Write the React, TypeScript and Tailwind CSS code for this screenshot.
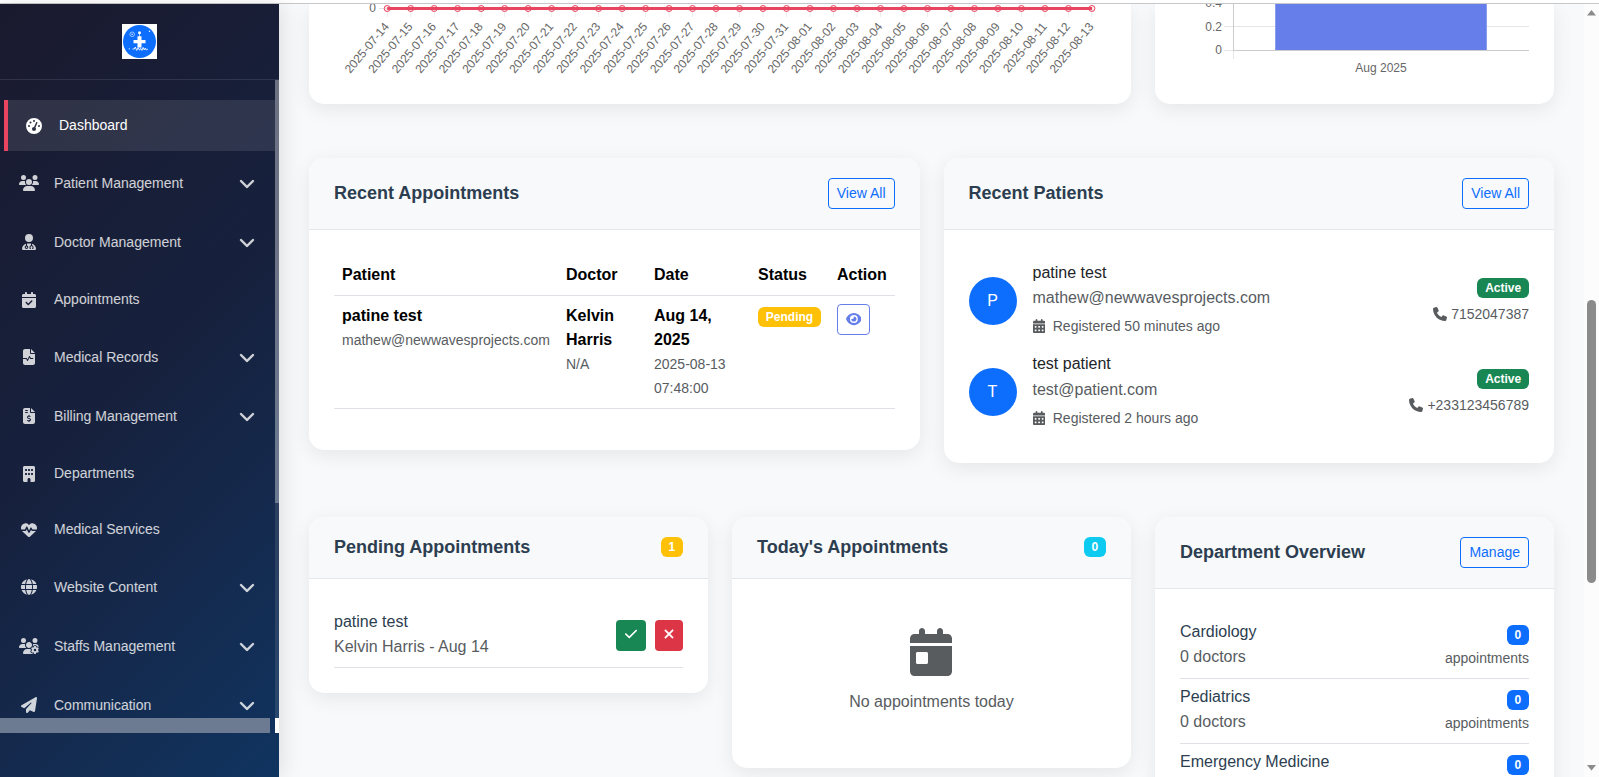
import { ReactNode } from "react";
import { IconType } from "react-icons";
import {
  FaBuilding,
  FaCalendarCheck,
  FaCalendarDay,
  FaCalendarDays,
  FaCheck,
  FaChevronDown,
  FaEye,
  FaFileInvoiceDollar,
  FaFileWaveform,
  FaGaugeHigh,
  FaGlobe,
  FaHeartPulse,
  FaPaperPlane,
  FaPhone,
  FaUserDoctor,
  FaUsers,
  FaUsersGear,
  FaXmark,
} from "react-icons/fa6";
import clsx from "clsx";

interface NavItem {
  label: string;
  icon: IconType;
  iconWidth: string;
  active?: boolean;
  expandable?: boolean;
}

const NAV_ITEMS: NavItem[] = [
  { label: "Dashboard", icon: FaGaugeHigh, iconWidth: "w-4", active: true },
  { label: "Patient Management", icon: FaUsers, iconWidth: "w-5", expandable: true },
  { label: "Doctor Management", icon: FaUserDoctor, iconWidth: "w-3.5", expandable: true },
  { label: "Appointments", icon: FaCalendarCheck, iconWidth: "w-3.5" },
  { label: "Medical Records", icon: FaFileWaveform, iconWidth: "w-4", expandable: true },
  { label: "Billing Management", icon: FaFileInvoiceDollar, iconWidth: "w-3", expandable: true },
  { label: "Departments", icon: FaBuilding, iconWidth: "w-3" },
  { label: "Medical Services", icon: FaHeartPulse, iconWidth: "w-4" },
  { label: "Website Content", icon: FaGlobe, iconWidth: "w-4", expandable: true },
  { label: "Staffs Management", icon: FaUsersGear, iconWidth: "w-5", expandable: true },
  { label: "Communication", icon: FaPaperPlane, iconWidth: "w-4", expandable: true },
];

const PATIENTS = [
  {
    initial: "P",
    name: "patine test",
    email: "mathew@newwavesprojects.com",
    registered: "Registered 50 minutes ago",
    phone: "7152047387",
  },
  {
    initial: "T",
    name: "test patient",
    email: "test@patient.com",
    registered: "Registered 2 hours ago",
    phone: "+233123456789",
  },
];

const DEPARTMENTS = ["Cardiology", "Pediatrics", "Emergency Medicine"];

const DAYS = Array.from({ length: 31 }, (_, i) =>
  i < 18 ? `2025-07-${14 + i}` : `2025-08-${String(i - 17).padStart(2, "0")}`
);

function Logo() {
  return (
    <svg aria-hidden="true" className="h-[35px] w-[35px]" viewBox="0 0 35 35">
      <rect width="35" height="35" fill="#fff" />
      <circle cx="17.5" cy="17.5" r="16.5" fill="#0d6efd" />
      <path d="M15.5 12.2h4v3.7h4v3.4h-4v4.2h-4v-4.2h-4v-3.4h4z" fill="#fff" />
      <circle cx="17.5" cy="8.8" r="1.5" fill="#fff" />
      <path d="M17.5 9v4" stroke="#fff" strokeWidth="0.6" />
      <circle cx="10.2" cy="10.3" r="2.3" fill="none" stroke="#cfe2ff" strokeWidth="0.7" />
      <circle cx="10.2" cy="10.3" r="0.7" fill="#fff" />
      <circle cx="27.5" cy="7.3" r="0.7" fill="#fff" />
      <circle cx="7.3" cy="24.8" r="0.6" fill="#fff" />
      <path
        d="M10.5 25h1.8l1-2 1.4 3.4 1.4-2.8 1.4 2.6 1.2-1.8 1.2 2 1.2-3 1.2 2.6 1-2 1 2 1.6-1"
        fill="none"
        stroke="#fff"
        strokeWidth="0.9"
      />
    </svg>
  );
}

function Sidebar() {
  return (
    <aside className="relative z-10 flex w-[279px] shrink-0 flex-col bg-linear-135 from-[#1a1a2e] via-[#16213e] to-[#0f3460] shadow-[4px_0_20px_rgba(0,0,0,0.1)]">
      <div className="flex h-[76px] shrink-0 justify-center border-b border-white/10 pt-5">
        <Logo />
      </div>

      <div className="flex h-[638px] shrink-0">
        <nav className="flex flex-1 flex-col gap-[5px] overflow-hidden pt-5">
          {NAV_ITEMS.map(({ label, icon: Icon, iconWidth, active, expandable }) => (
            <a
              key={label}
              className={clsx(
                "flex shrink-0 items-center text-[14px]",
                expandable ? "h-[54px]" : "h-[51px]",
                active
                  ? "ml-1 border-l-4 border-[#e94560] bg-white/10 pl-4 text-white"
                  : "pl-[19px] text-white/80"
              )}
            >
              <span className="mr-[15px] flex w-5 justify-center">
                <Icon className={clsx("h-4 shrink-0", iconWidth)} />
              </span>
              {label}
              {expandable && (
                <FaChevronDown className="mr-5 ml-auto h-4 w-4 [stroke-width:10]" />
              )}
            </a>
          ))}
        </nav>
        <div className="w-1 bg-white/10">
          <div className="h-[423px] bg-white/30" />
        </div>
      </div>

      {/* Horizontal scrollbar */}
      <div className="flex h-[15px] shrink-0 justify-between">
        <div className="w-[270px] bg-[#6d7b92]" />
        <div className="w-1 bg-white" />
      </div>
    </aside>
  );
}

function Card({ className, children }: { className?: string; children: ReactNode }) {
  return (
    <section
      className={clsx(
        "overflow-hidden rounded-[15px] bg-white shadow-[0_5px_20px_rgba(0,0,0,0.08)]",
        className
      )}
    >
      {children}
    </section>
  );
}

function CardHeader({ title, children }: { title: string; children: ReactNode }) {
  return (
    <header className="flex items-center justify-between border-b border-[#e3e8ed] bg-[#f8f9fa] px-[25px] py-5">
      <h5 className="text-[18px] leading-[21px] font-bold text-[#2c3e50]">{title}</h5>
      {children}
    </header>
  );
}

function OutlineButton({ children }: { children: ReactNode }) {
  return (
    <button className="rounded border border-[#0d6efd] px-2 py-1 text-[14px] leading-[21px] text-[#0d6efd]">
      {children}
    </button>
  );
}

function Badge({ className, children }: { className: string; children: ReactNode }) {
  return (
    <span
      className={clsx(
        "inline-block rounded-md px-[7.8px] py-[4.2px] text-center text-[12px] leading-none font-bold text-white",
        className
      )}
    >
      {children}
    </span>
  );
}

function TrendChart() {
  return (
    <svg className="block h-[100px] w-full" viewBox="0 4 822 100" fontSize="12" fill="#666">
      <text x="67" y="12" textAnchor="end">0</text>
      <line x1="70" x2="783" y1="8.5" y2="8.5" stroke="#e5e5e5" />
      {DAYS.map((day, i) => {
        const x = 78.2 + i * 23.49;
        return (
          <g key={day}>
            <line x1={x} x2={x} y1="9" y2="17" stroke="#000" strokeOpacity="0.08" />
            <text textAnchor="end" transform={`translate(${x + 2.5} 27) rotate(-50)`}>
              {day}
            </text>
          </g>
        );
      })}
      <line x1="78.2" x2="783" y1="8.5" y2="8.5" stroke="#e94560" strokeWidth="3" />
      {DAYS.map((day, i) => (
        <circle
          key={day}
          cx={78.2 + i * 23.49}
          cy="8.5"
          r="3"
          fill="#e94560"
          fillOpacity="0.1"
          stroke="#e94560"
        />
      ))}
    </svg>
  );
}

function MonthlyChart() {
  return (
    <svg className="block h-[100px] w-full" viewBox="0 4 399 100" fontSize="12" fill="#666">
      <line x1="69" x2="374" y1="26.5" y2="26.5" stroke="#e5e5e5" />
      <line x1="69" x2="78" y1="50.5" y2="50.5" stroke="#e5e5e5" />
      <line x1="78" x2="374" y1="50.5" y2="50.5" stroke="#ccc" />
      <line x1="78.5" x2="78.5" y1="4" y2="51" stroke="#ccc" />
      <line x1="78.5" x2="78.5" y1="51" y2="59" stroke="#e5e5e5" />
      <text x="67" y="6.5" textAnchor="end">0.4</text>
      <text x="67" y="30.5" textAnchor="end">0.2</text>
      <text x="67" y="54" textAnchor="end">0</text>
      <rect x="120" y="2" width="212" height="48" fill="#667eea" />
      <path d="M120.5 4v46M331.5 4v46" stroke="#8a9cef" />
      <text x="226" y="72" textAnchor="middle">Aug 2025</text>
    </svg>
  );
}

function RecentAppointments() {
  return (
    <Card>
      <CardHeader title="Recent Appointments">
        <OutlineButton>View All</OutlineButton>
      </CardHeader>
      <div className="px-[25px] pt-[25px] pb-[41px]">
        <table className="w-full table-fixed text-left leading-6">
          <colgroup>
            <col className="w-[224px]" />
            <col className="w-[88px]" />
            <col className="w-[104px]" />
            <col className="w-[79px]" />
            <col />
          </colgroup>
          <thead>
            <tr className="border-b border-[#dee2e6] text-black">
              {["Patient", "Doctor", "Date", "Status", "Action"].map((heading) => (
                <th key={heading} className="p-2 font-bold">{heading}</th>
              ))}
            </tr>
          </thead>
          <tbody>
            <tr className="border-b border-[#dee2e6] align-top">
              <td className="p-2">
                <strong className="text-black">patine test</strong>
                <br />
                <small className="text-[14px] text-[#585c5f]">mathew@newwavesprojects.com</small>
              </td>
              <td className="p-2">
                <strong className="text-black">Kelvin Harris</strong>
                <br />
                <small className="text-[14px] text-[#585c5f]">N/A</small>
              </td>
              <td className="p-2">
                <strong className="text-black">Aug 14, 2025</strong>
                <br />
                <small className="text-[14px] text-[#585c5f]">2025-08-13 07:48:00</small>
              </td>
              <td className="p-2">
                <Badge className="bg-[#ffc107]">Pending</Badge>
              </td>
              <td className="p-2">
                <button
                  aria-label="View appointment"
                  className="flex h-[31px] w-[33px] items-center justify-center rounded border border-[#667eea] pb-0.5 text-[#667eea]"
                >
                  <FaEye className="h-3.5 w-[15.75px] shrink-0" />
                </button>
              </td>
            </tr>
          </tbody>
        </table>
      </div>
    </Card>
  );
}

function RecentPatients() {
  return (
    <Card>
      <CardHeader title="Recent Patients">
        <OutlineButton>View All</OutlineButton>
      </CardHeader>
      <div className="p-[25px]">
        {PATIENTS.map((patient) => (
          <div key={patient.name} className="flex items-center py-2">
            <div className="mr-4 flex h-12 w-12 items-center justify-center rounded-full bg-[#0d6efd] text-white">
              {patient.initial}
            </div>
            <div className="flex-1">
              <h6 className="mb-1 leading-[19.2px] text-[#212529]">{patient.name}</h6>
              <p className="mb-[4.2px] leading-6 text-[#585c5f]">{patient.email}</p>
              <p className="flex items-center gap-2 text-[14px] leading-6 text-[#585c5f]">
                <FaCalendarDays className="h-3.5 w-[12.25px] shrink-0" />
                {patient.registered}
              </p>
            </div>
            <div className="flex flex-col items-end pt-0.5 text-[#585c5f]">
              <Badge className="mb-1 bg-[#198754]">Active</Badge>
              <span className="flex items-center gap-1 text-[14px] leading-6">
                <FaPhone className="h-3.5 w-3.5" />
                {patient.phone}
              </span>
            </div>
          </div>
        ))}
      </div>
    </Card>
  );
}

function PendingAppointments() {
  return (
    <Card>
      <CardHeader title="Pending Appointments">
        <Badge className="bg-[#ffc107]">1</Badge>
      </CardHeader>
      <div className="p-[25px]">
        <div className="flex items-center justify-between border-b border-[#dee2e6] py-2">
          <div>
            <h6 className="mb-1 leading-[19.2px] text-[#2c3e50]">patine test</h6>
            <p className="leading-6 text-[#585c5f]">Kelvin Harris - Aug 14</p>
          </div>
          <div className="flex gap-[9px] text-white">
            <button
              aria-label="Approve"
              className="flex h-[31px] w-[30px] items-center justify-center rounded bg-[#198754] pb-0.5"
            >
              <FaCheck className="h-3.5 w-3.5" />
            </button>
            <button
              aria-label="Reject"
              className="flex h-[31px] w-7 items-center justify-center rounded bg-[#dc3545] pb-0.5"
            >
              <FaXmark className="h-3.5 w-3.5 [stroke-width:10]" />
            </button>
          </div>
        </div>
      </div>
    </Card>
  );
}

function TodaysAppointments() {
  return (
    <Card className="h-[251px]">
      <CardHeader title="Today's Appointments">
        <Badge className="bg-[#0dcaf0]">0</Badge>
      </CardHeader>
      <div className="flex flex-col items-center pt-[49px] text-[#585c5f]">
        <FaCalendarDay className="mr-px mb-3.5 h-12 w-[42px]" />
        <p className="leading-6">No appointments today</p>
      </div>
    </Card>
  );
}

function DepartmentOverview() {
  return (
    <Card className="h-[420px]">
      <CardHeader title="Department Overview">
        <OutlineButton>Manage</OutlineButton>
      </CardHeader>
      <div className="p-[25px]">
        {DEPARTMENTS.map((name) => (
          <div
            key={name}
            className="flex items-center justify-between border-b border-[#dee2e6] py-2"
          >
            <div className="pb-px">
              <h6 className="mb-1 leading-[19.2px] text-[#2c3e50]">{name}</h6>
              <p className="leading-6 text-[#585c5f]">0 doctors</p>
            </div>
            <div className="flex flex-col items-end">
              <div className="flex h-6 items-center pt-0.5">
                <Badge className="bg-[#0d6efd]">0</Badge>
              </div>
              <span className="text-[14px] leading-6 text-[#585c5f]">appointments</span>
            </div>
          </div>
        ))}
      </div>
    </Card>
  );
}

function PageScrollbar() {
  return (
    <div className="flex w-[15px] shrink-0 flex-col items-center bg-[#fcfcfc]">
      <svg aria-hidden="true" className="h-[296px] w-full shrink-0" viewBox="0 0 15 296">
        <path d="M3 11.5 7.5 6l4.5 5.5z" fill="#8b8b8b" />
      </svg>
      <div className="h-[283px] w-[9px] shrink-0 rounded-full bg-[#8b8b8b]" />
      <svg aria-hidden="true" className="mt-auto h-4 w-full shrink-0" viewBox="0 0 15 16">
        <path d="M3 4l4.5 5.5L12 4z" fill="#8b8b8b" />
      </svg>
    </div>
  );
}

export default function App() {
  return (
    <div className="flex h-[777px] w-full flex-col overflow-hidden bg-white font-['Liberation_Sans',Arial,sans-serif] text-base">
      <div className="h-1 shrink-0 border-b border-[#c6c7ca]" />
      <div className="flex min-h-0 flex-1">
        <Sidebar />
        <main className="flex min-w-0 flex-1 flex-col gap-[54px] overflow-hidden bg-[#f8f9fa] px-[30px]">
          <div className="grid shrink-0 grid-cols-[822px_399px] gap-6">
            <Card className="rounded-t-none">
              <TrendChart />
            </Card>
            <Card className="rounded-t-none">
              <MonthlyChart />
            </Card>
          </div>
          <div className="grid shrink-0 grid-cols-2 items-start gap-6">
            <RecentAppointments />
            <RecentPatients />
          </div>
          <div className="grid shrink-0 grid-cols-3 items-start gap-6">
            <PendingAppointments />
            <TodaysAppointments />
            <DepartmentOverview />
          </div>
        </main>
        <PageScrollbar />
      </div>
    </div>
  );
}
